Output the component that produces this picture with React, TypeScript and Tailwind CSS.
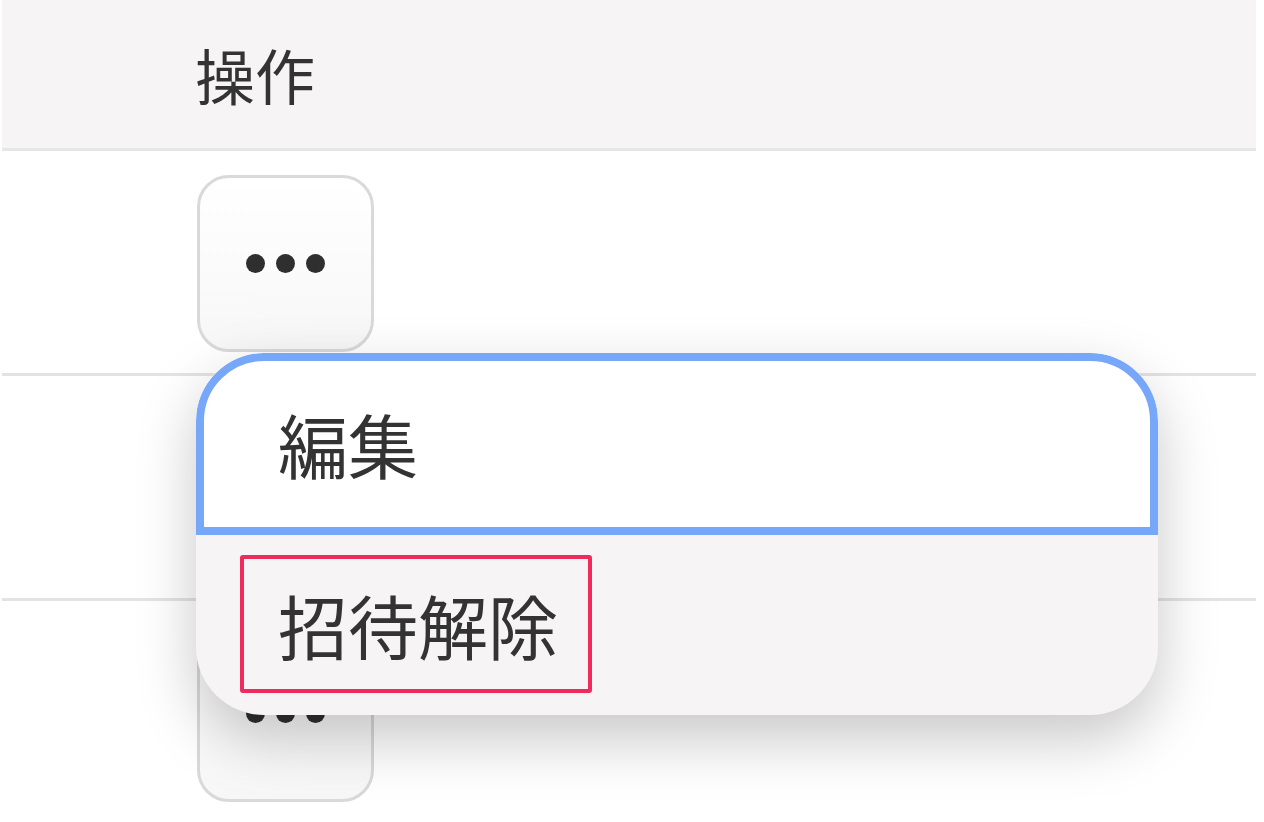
import React from "react";

const FONT = "font-['Noto_Sans_CJK_JP','Noto_Sans',sans-serif]";

function DotsButton() {
  return (
    <button
      type="button"
      className="w-[177px] h-[177px] rounded-[32px] border-[3px] border-[#d9d9d9] bg-gradient-to-b from-white to-[#f7f7f7] flex items-center justify-center gap-[11px]"
    >
      <span className="w-[19px] h-[19px] rounded-full bg-[#2f2f2f]" />
      <span className="w-[19px] h-[19px] rounded-full bg-[#2f2f2f]" />
      <span className="w-[19px] h-[19px] rounded-full bg-[#2f2f2f]" />
    </button>
  );
}

function Row() {
  return (
    <div className="h-[225px] border-b-[3px] border-[#e3e3e3] pt-[24px] pl-[195px]">
      <DotsButton />
    </div>
  );
}

export default function App() {
  return (
    <div className={`relative w-[1264px] h-[822px] bg-white overflow-hidden text-[#333333] ${FONT}`}>
      <div className="w-[1254px] ml-[2px]">
        <div className="h-[151px] bg-[#f6f4f5] border-b-[3px] border-[#e6e6e6] flex items-center pl-[193px] text-[60px] leading-none">
          操作
        </div>
        <Row />
        <Row />
        <Row />
      </div>

      {/* dropdown menu */}
      <div className="absolute left-[196px] top-[353px] w-[962px] rounded-[68px] bg-[#f6f4f5] overflow-hidden shadow-[0_24px_60px_rgba(0,0,0,0.22)]">
        <div className="h-[182px] bg-white border-[8px] border-[#77a7f8] rounded-t-[68px] flex items-center pl-[74px] text-[70px] leading-none">
          編集
        </div>
        <div className="relative h-[180px] flex items-center pl-[82px] text-[70px] leading-none">
          招待解除
          <div className="absolute left-[44px] top-[20px] w-[352px] h-[138px] border-[4px] border-[#ef2a5c] rounded-[3px]" />
        </div>
      </div>
    </div>
  );
}
